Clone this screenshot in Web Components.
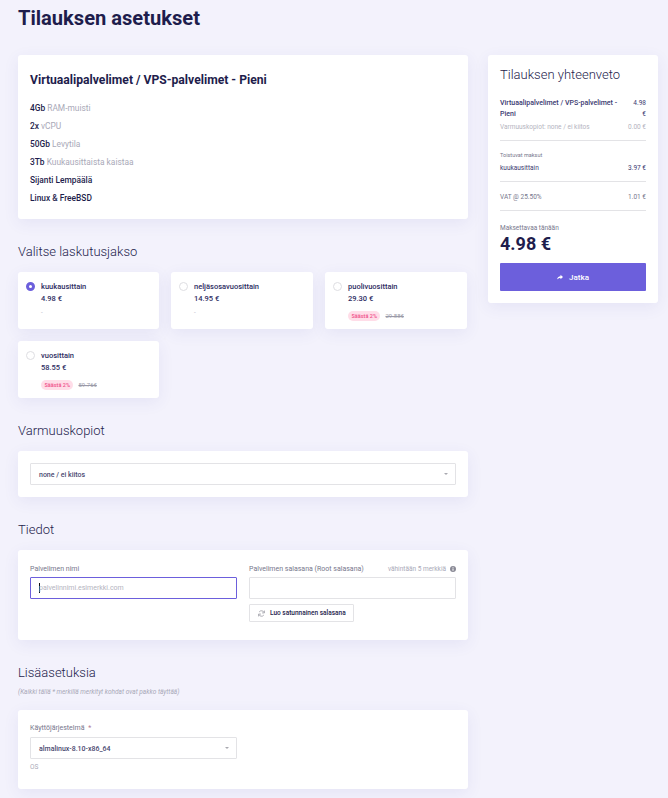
<!DOCTYPE html>
<html lang="fi">
<head>
<meta charset="utf-8">
<title>Tilauksen asetukset</title>
<style>
    html, body { margin: 0; height: 798px; overflow: hidden; background: #f3f2fc; }
    body { font-family: Roboto, "Liberation Sans", sans-serif; color: #1e1d4c; }
</style>
</head>
<body>
<order-page>
    <page-title slot="title">Tilauksen asetukset</page-title>

    <info-card slot="main" style="height:164px">
        <product-spec></product-spec>
    </info-card>

    <section-title slot="main" style="margin-top:24px">Valitse laskutusjakso</section-title>
    <period-grid slot="main">
        <period-card name="kuukausittain" price="4.98 €" checked></period-card>
        <period-card name="neljäsosavuosittain" price="14.95 €"></period-card>
        <period-card name="puolivuosittain" price="29.30 €" save="Säästä 2%" old="29.88€"></period-card>
        <period-card name="vuosittain" price="58.55 €" save="Säästä 2%" old="59.76€"></period-card>
    </period-grid>

    <section-title slot="main" style="margin-top:24px">Varmuuskopiot</section-title>
    <info-card slot="main" style="margin-top:11px;height:46px">
        <select-box value="none / ei kiitos"></select-box>
    </info-card>

    <section-title slot="main" style="margin-top:24px">Tiedot</section-title>
    <info-card slot="main" style="margin-top:11px;height:90px">
        <server-form></server-form>
    </info-card>

    <section-title slot="main" style="margin-top:24px">Lisäasetuksia</section-title>
    <small-note slot="main">(Kaikki tällä * merkillä merkityt kohdat ovat pakko täyttää)</small-note>
    <info-card slot="main" style="margin-top:13px;height:79px">
        <os-field></os-field>
    </info-card>

    <order-summary slot="side"></order-summary>
</order-page>

<script>
const ink = "#1e1d4c";
const muted = "#a9a9b8";
const line = "#e3e3e6";

class OrderPage extends HTMLElement {
    constructor() {
        super();
        this.attachShadow({ mode: "open" });
        this.shadowRoot.innerHTML = `
        <style>
            :host { display: block; padding: 0 10px 0 18px; }
            #head { height: 55px; }
            #cols { display: flex; gap: 20px; align-items: flex-start; }
            #main { width: 450px; flex: none; }
            #side { width: 170px; flex: none; }
        </style>
        <div id="head"><slot name="title"></slot></div>
        <div id="cols">
            <div id="main"><slot name="main"></slot></div>
            <div id="side"><slot name="side"></slot></div>
        </div>
        `;
    }
}

class PageTitle extends HTMLElement {
    constructor() {
        super();
        this.attachShadow({ mode: "open" });
        this.shadowRoot.innerHTML = `
        <style>
            :host { display: block; padding-top: 4px; font-size: 20.1px; line-height: 28px; font-weight: 700; color: ${ink}; }
        </style>
        <slot></slot>
        `;
    }
}

class InfoCard extends HTMLElement {
    constructor() {
        super();
        this.attachShadow({ mode: "open" });
        this.shadowRoot.innerHTML = `
        <style>
            :host { display: block; box-sizing: border-box; padding: 12px; background: #fff; border-radius: 3px; box-shadow: 0 4px 16px rgba(70, 60, 160, .08); }
        </style>
        <slot></slot>
        `;
    }
}

class SectionTitle extends HTMLElement {
    constructor() {
        super();
        this.attachShadow({ mode: "open" });
        this.shadowRoot.innerHTML = `
        <style>
            :host { display: block; font-size: 13px; line-height: 18px; font-weight: 300; color: ${ink}; }
        </style>
        <slot></slot>
        `;
    }
}

class SmallNote extends HTMLElement {
    constructor() {
        super();
        this.attachShadow({ mode: "open" });
        this.shadowRoot.innerHTML = `
        <style>
            :host { display: block; margin-top: 6px; font-size: 6.5px; line-height: 9px; font-style: italic; color: ${muted}; }
        </style>
        <slot></slot>
        `;
    }
}

class ProductSpec extends HTMLElement {
    constructor() {
        super();
        this.attachShadow({ mode: "open" });
        const rows = [["4Gb", "RAM-muisti"], ["2x", "vCPU"], ["50Gb", "Levytila"], ["3Tb", "Kuukausittaista kaistaa"], ["Sijanti Lempäälä", ""], ["Linux &amp; FreeBSD", ""]];
        this.shadowRoot.innerHTML = `
        <style>
            :host { display: block; }
            h2 { margin: 0 0 12px; padding-top: 6px; font-size: 12.15px; line-height: 14px; font-weight: 700; color: ${ink}; }
            div { font-size: 8.4px; line-height: 18px; color: ${muted}; }
            b { font-weight: 500; color: ${ink}; }
        </style>
        <h2>Virtuaalipalvelimet / VPS-palvelimet - Pieni</h2>
        ${rows.map(r => `<div><b>${r[0]}</b> ${r[1]}</div>`).join("")}
        `;
    }
}

class PeriodGrid extends HTMLElement {
    constructor() {
        super();
        this.attachShadow({ mode: "open" });
        this.shadowRoot.innerHTML = `
        <style>
            :host { display: grid; grid-template-columns: 141px 142px 142px; column-gap: 12px; row-gap: 12px; margin-top: 11px; }
        </style>
        <slot></slot>
        `;
    }
}

class PeriodCard extends HTMLElement {
    constructor() {
        super();
        this.attachShadow({ mode: "open" });
        const save = this.getAttribute("save");
        const radio = this.hasAttribute("checked") ? "on" : "";
        this.shadowRoot.innerHTML = `
        <style>
            :host { display: flex; box-sizing: border-box; height: 57px; padding: 9.5px 8px; gap: 6px; background: #fff; border-radius: 3px; box-shadow: 0 4px 16px rgba(70, 60, 160, .08); }
            #radio { width: 9px; height: 9px; flex: none; box-sizing: border-box; border: 1px solid #dedee2; border-radius: 50%; }
            #radio.on { border: 3px solid #6c5fdc; }
            #name, #price { font-size: 7.5px; line-height: 9px; font-weight: 500; color: #2d2c62; }
            #price { margin-top: 3px; }
            #extra { display: flex; align-items: center; gap: 5px; margin-top: 8px; height: 10px; font-size: 6px; color: ${muted}; }
            #extra.none { margin-top: 4px; }
            #save { padding: 0 3.5px; line-height: 10px; font-size: 5.5px; background: #ffdde8; color: #ef4f8a; border-radius: 5px; font-weight: 500; }
            s { color: #9a9aa8; }
        </style>
        <div id="radio" class="${radio}"></div>
        <div>
            <div id="name">${this.getAttribute("name")}</div>
            <div id="price">${this.getAttribute("price")}</div>
            <div id="extra" class="${save ? "" : "none"}">${save ? `<span id="save">${save}</span><s>${this.getAttribute("old")}</s>` : "-"}</div>
        </div>
        `;
    }
}

class SelectBox extends HTMLElement {
    constructor() {
        super();
        this.attachShadow({ mode: "open" });
        this.shadowRoot.innerHTML = `
        <style>
            :host { display: flex; align-items: center; justify-content: space-between; box-sizing: border-box; height: 22px; padding: 0 7px 0 8px; background: #fff; border: 1px solid ${line}; border-radius: 1px; font-size: 7px; font-weight: 500; color: #4a4970; }
            span { padding-top: 1px; }
            i { width: 0; height: 0; border: 2px solid transparent; border-top: 2.5px solid #a9a9b0; border-bottom: 0; }
        </style>
        <span>${this.getAttribute("value")}</span><i></i>
        `;
    }
}

class ServerForm extends HTMLElement {
    constructor() {
        super();
        this.attachShadow({ mode: "open" });
        this.shadowRoot.innerHTML = `
        <style>
            :host { display: grid; grid-template-columns: 207px 207px; column-gap: 12px; }
            .label { display: flex; justify-content: space-between; align-items: center; box-sizing: border-box; height: 12px; padding-top: 1px; margin-bottom: 3px; font-size: 7px; color: #77778c; }
            .hint { display: flex; align-items: center; gap: 4px; color: ${muted}; font-size: 6.5px; }
            .input { box-sizing: border-box; height: 22px; border: 1px solid ${line}; border-radius: 1px; }
            #name { display: flex; align-items: center; padding-left: 8px; border-color: #6c5fdc; font-size: 7px; color: #b4b4c0; }
            #name i { width: 1px; height: 10px; background: #111; margin-right: -1px; }
            #gen { display: inline-flex; align-items: center; gap: 5px; box-sizing: border-box; height: 18px; margin-top: 5px; padding: 0 7.5px 0 8px; border: 1px solid ${line}; border-radius: 1px; font-size: 6.5px; font-weight: 500; color: ${ink}; }
            svg { display: block; }
        </style>
        <div>
            <div class="label">Palvelimen nimi</div>
            <div class="input" id="name"><i></i>palvelinnimi.esimerkki.com</div>
        </div>
        <div>
            <div class="label">
                <span>Palvelimen salasana (Root salasana)</span>
                <span class="hint">vähintään 5 merkkiä
                    <svg width="6" height="6" viewBox="0 0 12 12"><circle cx="6" cy="6" r="6" fill="#8a8a96"/><rect x="5" y="5" width="2" height="4.5" fill="#fff"/><rect x="5" y="2.5" width="2" height="1.6" fill="#fff"/></svg>
                </span>
            </div>
            <div class="input"></div>
            <div id="gen">
                <svg width="7" height="7" viewBox="0 0 12 12" fill="none" stroke="#a4a4ac" stroke-width="1.5"><path d="M10.5 4.5A4.8 4.8 0 0 0 2 3.4"/><path d="M1.5 7.5A4.8 4.8 0 0 0 10 8.6"/><path d="M11 1v4H7" /><path d="M1 11V7h4"/></svg>
                Luo satunnainen salasana
            </div>
        </div>
        `;
    }
}

class OsField extends HTMLElement {
    constructor() {
        super();
        this.attachShadow({ mode: "open" });
        this.shadowRoot.innerHTML = `
        <style>
            :host { display: block; width: 207px; }
            #label { box-sizing: border-box; height: 12px; padding-top: 1px; margin-bottom: 3px; font-size: 7px; line-height: 11px; color: #77778c; }
            #label em { font-style: normal; color: #b07a96; margin-left: 2px; }
            #os { margin-top: 3.5px; font-size: 6.5px; line-height: 9px; color: ${muted}; }
        </style>
        <div id="label">Käyttöjärjestelmä <em>*</em></div>
        <select-box value="almalinux-8.10-x86_64"></select-box>
        <div id="os">OS</div>
        `;
    }
}

class OrderSummary extends HTMLElement {
    constructor() {
        super();
        this.attachShadow({ mode: "open" });
        this.shadowRoot.innerHTML = `
        <style>
            :host { display: block; box-sizing: border-box; height: 248px; padding: 12px; background: #fff; border-radius: 3px; box-shadow: 0 4px 16px rgba(70, 60, 160, .08); font-size: 6.5px; }
            h3 { margin: 0; font-size: 13px; line-height: 16px; font-weight: 300; color: ${ink}; }
            .row { display: flex; justify-content: space-between; gap: 8px; line-height: 10px; }
            .first { margin-top: 15px; font-size: 7px; line-height: 11px; font-weight: 500; color: #3a3970; }
            .first span:last-child { width: 13px; text-align: right; flex: none; font-weight: 400; font-size: 6.5px; }
            .grey { margin-top: 2px; color: #b4b4c0; }
            hr { margin: 8px 0 0; border: 0; border-top: 1px solid ${line}; }
            .small { font-size: 5.5px; line-height: 8px; color: #77778c; margin: 10px 0 4px; }
            #vat { margin-top: 10px; color: #77778c; }
            #to { margin-top: 12px; font-size: 6.5px; line-height: 10px; color: #77778c; }
            #total { font-size: 18px; line-height: 22px; font-weight: 700; color: ${ink}; }
            #go { display: flex; align-items: center; justify-content: center; gap: 6px; height: 28px; margin-top: 8px; background: #6c5fdc; color: #fff; border-radius: 1px; font-size: 8px; font-weight: 500; }
        </style>
        <h3>Tilauksen yhteenveto</h3>
        <div class="row first"><span>Virtuaalipalvelimet / VPS-palvelimet - Pieni</span><span>4.98 €</span></div>
        <div class="row grey"><span>Varmuuskopiot: none / ei kiitos</span><span>0.00 €</span></div>
        <hr>
        <div class="small">Toistuvat maksut</div>
        <div class="row" style="color:#3a3970"><span>kuukausittain</span><span>3.97 €</span></div>
        <hr>
        <div class="row" id="vat"><span>VAT @ 25.50%</span><span>1.01 €</span></div>
        <hr>
        <div id="to">Maksettavaa tänään</div>
        <div id="total">4.98 €</div>
        <div id="go">
            <svg width="6" height="6" viewBox="0 0 12 12" fill="#fff"><path d="M7 1.5 12 6 7 10.5V8C4 8 2 9 0 11c.6-3.6 3-6 7-6.5z"/></svg>
            Jatka
        </div>
        `;
    }
}

customElements.define("select-box", SelectBox);
customElements.define("order-page", OrderPage);
customElements.define("page-title", PageTitle);
customElements.define("info-card", InfoCard);
customElements.define("section-title", SectionTitle);
customElements.define("small-note", SmallNote);
customElements.define("product-spec", ProductSpec);
customElements.define("period-grid", PeriodGrid);
customElements.define("period-card", PeriodCard);
customElements.define("server-form", ServerForm);
customElements.define("os-field", OsField);
customElements.define("order-summary", OrderSummary);
</script>
</body>
</html>
